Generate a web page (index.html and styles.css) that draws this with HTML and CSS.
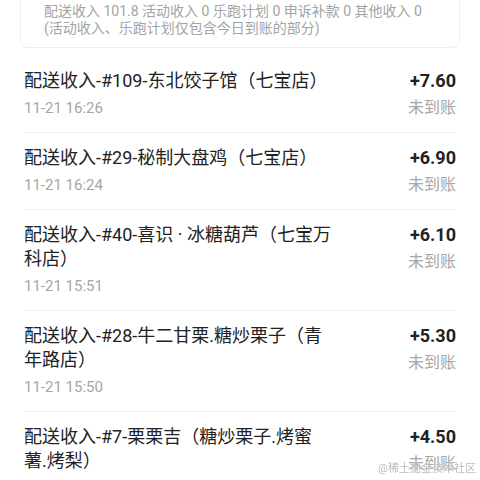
FILE: index.html
```html
<!DOCTYPE html>
<html lang="zh-CN">
  <head>
    <meta charset="UTF-8" />
    <meta name="viewport" content="width=device-width, initial-scale=1.0" />
    <title>收入明细</title>
    <link rel="stylesheet" href="styles.css">
  </head>
  <body>
    <div class="summary">
      <p>配送收入 101.8 活动收入 0 乐跑计划 0 申诉补款 0 其他收入 0</p>
      <p>(活动收入、乐跑计划仅包含今日到账的部分)</p>
    </div>

    <ul class="records">
      <li class="record">
        <div class="info">
          <div class="title">配送收入-#109-东北饺子馆（七宝店）</div>
          <div class="time">11-21 16:26</div>
        </div>
        <div class="money">
          <div class="amount">+7.60</div>
          <div class="status">未到账</div>
        </div>
      </li>
      <li class="record">
        <div class="info">
          <div class="title">配送收入-#29-秘制大盘鸡（七宝店）</div>
          <div class="time">11-21 16:24</div>
        </div>
        <div class="money">
          <div class="amount">+6.90</div>
          <div class="status">未到账</div>
        </div>
      </li>
      <li class="record">
        <div class="info">
          <div class="title">配送收入-#40-喜识 · 冰糖葫芦（七宝万科店）</div>
          <div class="time">11-21 15:51</div>
        </div>
        <div class="money">
          <div class="amount">+6.10</div>
          <div class="status">未到账</div>
        </div>
      </li>
      <li class="record">
        <div class="info">
          <div class="title">配送收入-#28-牛二甘栗.糖炒栗子（青年路店）</div>
          <div class="time">11-21 15:50</div>
        </div>
        <div class="money">
          <div class="amount">+5.30</div>
          <div class="status">未到账</div>
        </div>
      </li>
      <li class="record">
        <div class="info">
          <div class="title">配送收入-#7-栗栗吉（糖炒栗子.烤蜜薯.烤梨）</div>
          <div class="time">11-21 15:47</div>
        </div>
        <div class="money">
          <div class="amount">+4.50</div>
          <div class="status">未到账</div>
        </div>
      </li>
    </ul>

    <div class="watermark">@稀土掘金技术社区</div>
  </body>
</html>
```

FILE: styles.css
```css
body {
  margin: 0;
  font-family: Roboto, "Noto Sans CJK SC", sans-serif;
  background: #fff;
  color: #222;
  overflow: hidden;
}
.summary {
  margin: -10px 20px 0;
  padding: 12px 23px 10px;
  border: 1px solid #ededed;
  border-radius: 8px;
  color: #a3a3a3;
  font-size: 14px;
  line-height: 17px;
}
.summary p {
  margin: 0;
}
.records {
  list-style: none;
  margin: 8px 24px 0;
  padding: 0;
}
.record {
  display: flex;
  justify-content: space-between;
  padding: 13px 0 14px;
  border-bottom: 1px solid #eeeeee;
}
.info {
  width: 310px;
}
.title {
  font-size: 18px;
  line-height: 24px;
}
.time {
  margin-top: 5px;
  font-size: 15px;
  line-height: 20px;
  color: #a6a6a6;
}
.money {
  text-align: right;
}
.amount {
  font-size: 18px;
  font-weight: bold;
  line-height: 24px;
}
.status {
  margin-top: 5px;
  font-size: 16px;
  line-height: 20px;
  color: #a6a6a6;
}
.watermark {
  position: fixed;
  right: 4px;
  bottom: 4px;
  font-size: 11px;
  line-height: 14px;
  color: rgba(170, 170, 170, 0.8);
  text-shadow: 0 0 1px #fff;
}
```
